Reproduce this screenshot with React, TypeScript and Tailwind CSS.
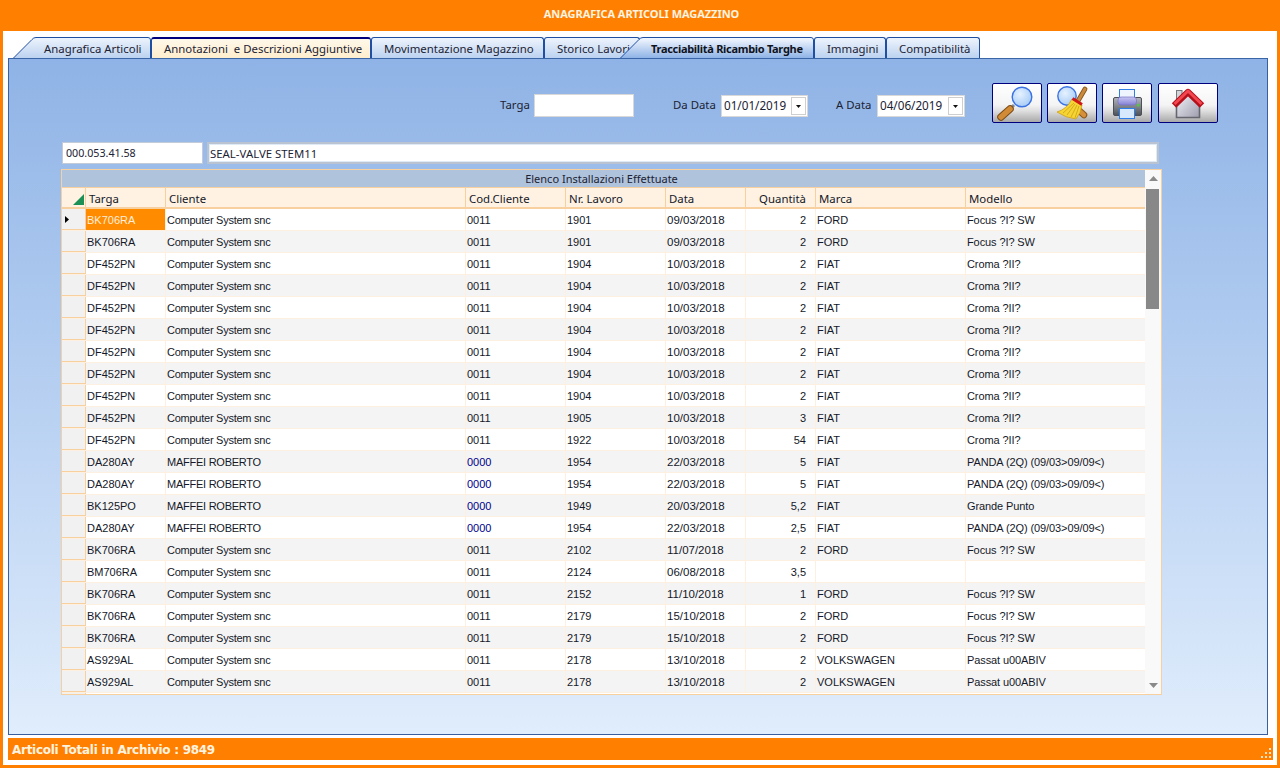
import React from "react";

const COLS = "grid grid-cols-[24px_80px_300px_100px_100px_80px_70px_150px_179px]";

type R = [string, string, string, string, string, string, string, string];
const CS = "Computer System snc";
const MR = "MAFFEI ROBERTO";
const F = "Focus ?I? SW";
const C = "Croma ?II?";
const P = "PANDA (2Q) (09/03>09/09<)";
const S = "Passat u00ABIV";
const rows: R[] = [
  ["BK706RA", CS, "0011", "1901", "09/03/2018", "2", "FORD", F],
  ["BK706RA", CS, "0011", "1901", "09/03/2018", "2", "FORD", F],
  ["DF452PN", CS, "0011", "1904", "10/03/2018", "2", "FIAT", C],
  ["DF452PN", CS, "0011", "1904", "10/03/2018", "2", "FIAT", C],
  ["DF452PN", CS, "0011", "1904", "10/03/2018", "2", "FIAT", C],
  ["DF452PN", CS, "0011", "1904", "10/03/2018", "2", "FIAT", C],
  ["DF452PN", CS, "0011", "1904", "10/03/2018", "2", "FIAT", C],
  ["DF452PN", CS, "0011", "1904", "10/03/2018", "2", "FIAT", C],
  ["DF452PN", CS, "0011", "1904", "10/03/2018", "2", "FIAT", C],
  ["DF452PN", CS, "0011", "1905", "10/03/2018", "3", "FIAT", C],
  ["DF452PN", CS, "0011", "1922", "10/03/2018", "54", "FIAT", C],
  ["DA280AY", MR, "0000", "1954", "22/03/2018", "5", "FIAT", P],
  ["DA280AY", MR, "0000", "1954", "22/03/2018", "5", "FIAT", P],
  ["BK125PO", MR, "0000", "1949", "20/03/2018", "5,2", "FIAT", "Grande Punto"],
  ["DA280AY", MR, "0000", "1954", "22/03/2018", "2,5", "FIAT", P],
  ["BK706RA", CS, "0011", "2102", "11/07/2018", "2", "FORD", F],
  ["BM706RA", CS, "0011", "2124", "06/08/2018", "3,5", "", ""],
  ["BK706RA", CS, "0011", "2152", "11/10/2018", "1", "FORD", F],
  ["BK706RA", CS, "0011", "2179", "15/10/2018", "2", "FORD", F],
  ["BK706RA", CS, "0011", "2179", "15/10/2018", "2", "FORD", F],
  ["AS929AL", CS, "0011", "2178", "13/10/2018", "2", "VOLKSWAGEN", S],
  ["AS929AL", CS, "0011", "2178", "13/10/2018", "2", "VOLKSWAGEN", S],
];

function Tab({
  w,
  pl,
  label,
  variant = "plain",
}: {
  w: number;
  pl: number;
  label: string;
  variant?: "plain" | "cream" | "first" | "active";
}) {
  if (variant === "first" || variant === "active") {
    const active = variant === "active";
    const id = active ? "tabActive" : "tabFirst";
    return (
      <div className="relative z-10 h-[21px] shrink-0" style={{ width: w, marginLeft: active ? -20 : 0 }}>
        <svg className="absolute inset-0" width={w} height={21} viewBox={`0 0 ${w} 21`}>
          <defs>
            <linearGradient id={id} x1="0" y1="0" x2="0" y2="1">
              <stop offset="0" stopColor={active ? "#f6faff" : "#eef4fc"} />
              <stop offset="1" stopColor={active ? "#8fb3e6" : "#bcd2f0"} />
            </linearGradient>
          </defs>
          <path
            d={`M0.5 21 L19 2.5 Q20.5 0.5 23 0.5 L${w - 3} 0.5 Q${w - 0.5} 0.5 ${w - 0.5} 3 L${w - 0.5} 21 Z`}
            fill={`url(#${id})`}
            stroke="none"
          />
          <path
            d={`M0.5 21 L19 2.5 Q20.5 0.5 23 0.5 L${w - 3} 0.5 Q${w - 0.5} 0.5 ${w - 0.5} 3 L${w - 0.5} 21`}
            fill="none"
            stroke="#1f4fa3"
          />
        </svg>
        <span
          className={`absolute left-0 top-[4px] whitespace-nowrap leading-[16px] ${active ? "text-[11px] font-bold tracking-[-0.3px] text-[#10131c]" : "text-[11.4px] text-[#1c2233]"}`}
          style={{ paddingLeft: pl }}
        >
          {label}
        </span>
      </div>
    );
  }
  const cream = variant === "cream";
  return (
    <div
      className={`h-[21px] shrink-0 rounded-t-[3px] border-x border-t border-[#1f4fa3] ${cream ? "border-t-2 border-t-[#00007f] bg-gradient-to-b from-[#fff8ea] to-[#ffeecd] pt-[2px]" : "bg-gradient-to-b from-[#eef4fc] to-[#bcd2f0] pt-[3px]"} whitespace-pre text-[11.4px] leading-[16px] text-[#1c2233]`}
      style={{ width: w, paddingLeft: pl }}
    >
      {label}
    </div>
  );
}

function Btn({ w, children }: { w: number; children: React.ReactNode }) {
  return (
    <button
      className="block h-[40px] shrink-0 rounded-[2px] border border-[#00007f] bg-[linear-gradient(180deg,#ffffff_0%,#f4f4f4_55%,#e0e0e0_70%,#a9a9a9_100%)]"
      style={{ width: w }}
    >
      {children}
    </button>
  );
}

function Lens({ cx, cy, r, id }: { cx: number; cy: number; r: number; id: string }) {
  return (
    <>
      <defs>
        <radialGradient id={id} cx="0.4" cy="0.35" r="0.8">
          <stop offset="0" stopColor="#e6f2ff" />
          <stop offset="1" stopColor="#9cc4f4" />
        </radialGradient>
      </defs>
      <circle cx={cx} cy={cy} r={r} fill={`url(#${id})`} stroke="#3a72e4" strokeWidth="1.4" />
    </>
  );
}

const SearchIcon = () => (
  <svg width="48" height="38" viewBox="0 0 48 38" className="block">
    <path d="M21 21 L17 25" stroke="#7e8792" strokeWidth="3" />
    <path d="M17 25 L8 33" stroke="#7a4a14" strokeWidth="7.5" strokeLinecap="round" />
    <path d="M17 25 L8 33" stroke="#d18a35" strokeWidth="5.5" strokeLinecap="round" />
    <Lens cx={29} cy={13} r={9.8} id="l1" />
  </svg>
);

const BroomIcon = () => (
  <svg width="48" height="38" viewBox="0 0 48 38" className="block">
    <path d="M24 20 L36 31" stroke="#8a5518" strokeWidth="6.5" strokeLinecap="round" />
    <path d="M24 20 L36 31" stroke="#d68f3a" strokeWidth="4.5" strokeLinecap="round" />
    <Lens cx={19} cy={12} r={9.2} id="l2" />
    <path d="M37 5 L30 17" stroke="#8a5518" strokeWidth="4.8" strokeLinecap="round" />
    <path d="M37 5 L30 17" stroke="#c98a3e" strokeWidth="3" strokeLinecap="round" />
    <path d="M24 15 L34 21 Q33 29 28 35 Q18 34 9 28 Q19 25 24 15 Z" fill="#f6d433" stroke="#c79a16" strokeWidth="0.7" />
    <path d="M26 19 L15 29 M27 20 L19 31 M29 21 L23 33 M31 22 L27 34" stroke="#c79a16" strokeWidth="0.7" />
    <path d="M24.5 14.5 L34 20.5" stroke="#d01818" strokeWidth="3" />
  </svg>
);

const PrinterIcon = () => (
  <svg width="48" height="38" viewBox="0 0 48 38" className="block">
    <defs>
      <linearGradient id="pb" x1="0" y1="0" x2="0" y2="1">
        <stop offset="0" stopColor="#b4b7bd" />
        <stop offset="1" stopColor="#4c5058" />
      </linearGradient>
      <linearGradient id="pp" x1="0" y1="0" x2="0" y2="1">
        <stop offset="0" stopColor="#c9c7f4" />
        <stop offset="1" stopColor="#8480d4" />
      </linearGradient>
    </defs>
    <rect x="16.5" y="5.5" width="15" height="9" fill="#eef5ff" stroke="#2f7fe8" />
    <rect x="10.5" y="13.5" width="28" height="18" rx="1.5" fill="url(#pb)" stroke="#4c4f56" />
    <rect x="15" y="13" width="18.5" height="8" rx="3" fill="url(#pp)" stroke="#7773c4" strokeWidth="0.7" />
    <rect x="16.5" y="24.5" width="15" height="10" fill="#d6e9fd" stroke="#2f7fe8" />
    <rect x="34" y="20" width="2.4" height="2.4" fill="#4ecb3b" />
  </svg>
);

const HomeIcon = () => (
  <svg width="58" height="38" viewBox="0 0 58 38" className="block">
    <defs>
      <linearGradient id="hb" x1="0" y1="0" x2="1" y2="1">
        <stop offset="0" stopColor="#f6f6fb" />
        <stop offset="1" stopColor="#9c9cae" />
      </linearGradient>
    </defs>
    <rect x="17.5" y="6.5" width="5.5" height="10" fill="#d4d4d8" stroke="#77777f" />
    <path d="M17.5 20 L29 9 L40.5 20 V33.5 H17.5 Z" fill="url(#hb)" stroke="#66666f" strokeWidth="1.6" />
    <path d="M15 21.5 L29 8 L43 21.5" fill="none" stroke="#b50f1a" strokeWidth="6.4" strokeLinejoin="round" />
    <path d="M15.5 20 L29 7 L42.5 20" fill="none" stroke="#f24750" strokeWidth="3" strokeLinejoin="round" />
  </svg>
);

function DateBox({ w, value }: { w: number; value: string }) {
  return (
    <div
      className="flex h-[22px] shrink-0 items-center justify-between border border-[#d8d8d8] bg-white pl-[2px] pr-[1px] text-[11.7px] text-[#1c2233]"
      style={{ width: w }}
    >
      <span>{value}</span>
      <span className="flex h-[18px] w-[15px] items-center justify-center border border-[#cfcfcf] bg-white">
        <svg width="5" height="3" viewBox="0 0 5 3">
          <path d="M0 0 H5 L2.5 3 Z" fill="#111" />
        </svg>
      </span>
    </div>
  );
}

export default function App() {
  return (
    <div className="flex h-[768px] w-[1280px] flex-col overflow-hidden bg-[#ff8000] font-['Noto_Sans',sans-serif]">
      <div className="flex h-[31px] shrink-0 items-center justify-center pb-[2px] pl-[3px] text-[11px] font-bold tracking-[-0.05px] text-[#fff4e0]">
        ANAGRAFICA ARTICOLI MAGAZZINO
      </div>
      <div className="mb-[3px] ml-[3px] mr-[3px] flex flex-1 flex-col bg-white pl-[5px]">
        {/* tabs */}
        <div className="flex h-[27px] shrink-0 items-end pl-[5px]">
          <Tab w={138} pl={31} label="Anagrafica Articoli" variant="first" />
          <Tab w={220} pl={12} label="Annotazioni  e Descrizioni Aggiuntive" variant="cream" />
          <Tab w={173} pl={12} label="Movimentazione Magazzino" />
          <Tab w={96} pl={12} label="Storico Lavori" />
          <Tab w={194} pl={31} label="Tracciabilità Ricambio Targhe" variant="active" />
          <Tab w={72} pl={12} label="Immagini" />
          <Tab w={94} pl={12} label="Compatibilità" />
        </div>
        {/* panel */}
        <div className="mr-[9px] h-[677px] shrink-0 border border-[#3a5f9f] border-t-[#3a66a8] bg-gradient-to-b from-[#8fb3e6] to-[#e0edfc] pt-[24px]">
          <div className="flex h-[40px] items-start pl-[491px] text-[11.4px] text-[#1c2233]">
            <span className="mt-[14px] w-[29px] shrink-0 leading-[16px]">Targa</span>
            <div className="ml-[5px] mt-[11px] h-[23px] w-[100px] shrink-0 border border-[#d8d8d8] bg-white" />
            <span className="ml-[39px] mt-[14px] w-[39px] shrink-0 whitespace-nowrap leading-[16px]">Da Data</span>
            <div className="ml-[9px] mt-[12px]">
              <DateBox w={87} value="01/01/2019" />
            </div>
            <span className="ml-[28px] mt-[14px] w-[35px] shrink-0 whitespace-nowrap leading-[16px]">A Data</span>
            <div className="ml-[6px] mt-[12px]">
              <DateBox w={88} value="04/06/2019" />
            </div>
            <div className="ml-[27px] flex shrink-0 gap-[5px]">
              <Btn w={50}><SearchIcon /></Btn>
              <Btn w={50}><BroomIcon /></Btn>
              <Btn w={50}><PrinterIcon /></Btn>
              <div className="ml-[1px]">
                <Btn w={60}><HomeIcon /></Btn>
              </div>
            </div>
          </div>
          {/* code row */}
          <div className="mt-[19px] flex h-[22px] gap-[4px] pl-[53px] text-[#1c2233]">
            <div className="flex w-[141px] items-center border border-[#c3cbd8] bg-white pl-[3px] pt-[1px] text-[10.7px]">000.053.41.58</div>
            <div className="flex w-[952px] items-center border-2 border-[#b9c3d1] bg-white pl-[1px] pt-[1px] text-[11.4px] shadow-[inset_0_0_0_1px_#dfeaf7]">
              SEAL-VALVE STEM11
            </div>
          </div>
          {/* table */}
          <div className="ml-[52px] mt-[5px] flex h-[526px] w-[1101px] border border-[#f8cf9f] bg-white font-['Liberation_Sans',sans-serif] text-[11px] text-[#141828]">
            <div className="flex w-[1083px] shrink-0 flex-col overflow-hidden">
              <div className="flex h-[18px] shrink-0 items-center justify-center border-b border-[#f8cf9f] bg-[#afc3dc] pr-[4px] pt-[2px] font-['Noto_Sans',sans-serif] text-[11px] text-[#1c2233]">
                Elenco Installazioni Effettuate
              </div>
              <div className={`${COLS} h-[21px] shrink-0 grid-rows-[19px] border-b-2 border-[#f8cf9f] bg-[#fff2e3] font-['Noto_Sans',sans-serif] text-[11.4px] leading-[19px] [&>div]:pt-[1px]`}>
                <div className="relative border-r border-[#f8cf9f]">
                  <svg className="absolute left-[11px] top-[6px]" width="11" height="11" viewBox="0 0 11 11">
                    <path d="M0 11 L11 0 V11 Z" fill="#1c9157" />
                  </svg>
                </div>
                <div className="border-r border-[#f8cf9f] pl-[3px]">Targa</div>
                <div className="border-r border-[#f8cf9f] pl-[3px]">Cliente</div>
                <div className="border-r border-[#f8cf9f] pl-[3px]">Cod.Cliente</div>
                <div className="border-r border-[#f8cf9f] pl-[3px]">Nr. Lavoro</div>
                <div className="border-r border-[#f8cf9f] pl-[3px]">Data</div>
                <div className="border-r border-[#f8cf9f] pr-[9px] text-right">Quantità</div>
                <div className="border-r border-[#f8cf9f] pl-[3px]">Marca</div>
                <div className="pl-[3px]">Modello</div>
              </div>
              {rows.map((r, i) => (
                <div
                  key={i}
                  className={`${COLS} h-[22px] shrink-0 grid-rows-[21px] border-b border-[#fdf0e1] leading-[19px] [&>div]:pt-[2px] ${i % 2 ? "bg-[#f4f4f4]" : "bg-white"}`}
                >
                  <div className="relative border-b border-r border-[#f8cf9f] bg-[#f1f1f1]">
                    {i === 0 && (
                      <svg className="absolute left-[3px] top-[7px]" width="4" height="7" viewBox="0 0 4 7">
                        <path d="M0 0 L4 3.5 L0 7 Z" fill="#000" />
                      </svg>
                    )}
                  </div>
                  <div className={`border-r border-[#fdf0e1] pl-[1px] ${i === 0 ? "bg-[#ff8c00] text-[#ffeedd]" : ""}`}>
                    {r[0]}
                  </div>
                  <div className="border-r border-[#fdf0e1] pl-[1px] tracking-[-0.25px]">{r[1]}</div>
                  <div className={`border-r border-[#fdf0e1] pl-[1px] ${r[2] === "0000" ? "text-[#00008b]" : ""}`}>{r[2]}</div>
                  <div className="border-r border-[#fdf0e1] pl-[1px]">{r[3]}</div>
                  <div className="border-r border-[#fdf0e1] pl-[1px] text-[11.5px]">{r[4]}</div>
                  <div className="border-r border-[#fdf0e1] pr-[9px] text-right">{r[5]}</div>
                  <div className="border-r border-[#fdf0e1] pl-[1px]">{r[6]}</div>
                  <div className="whitespace-nowrap pl-[1px] tracking-[-0.1px]">{r[7]}</div>
                </div>
              ))}
              <div className="h-[1px] w-[24px] border-r border-[#f8cf9f] bg-[#f1f1f1]" />
            </div>
            <div className="flex w-[16px] shrink-0 flex-col items-center bg-[#f9f9f9]">
              <svg className="mt-[6px] h-[5px] w-[9px]" viewBox="0 0 9 5">
                <path d="M0 5 L4.5 0 L9 5 Z" fill="#8a8a8a" />
              </svg>
              <div className="ml-[-1px] mt-[8px] h-[120px] w-[13px] bg-[#888888]" />
              <svg className="mt-[374px] h-[5px] w-[9px]" viewBox="0 0 9 5">
                <path d="M0 0 L9 0 L4.5 5 Z" fill="#8a8a8a" />
              </svg>
            </div>
          </div>
        </div>
        {/* status */}
        <div className="mr-[4px] mt-[3px] flex h-[22px] shrink-0 items-center justify-between bg-[#ff8000] pl-[4px] pr-[1px]">
          <span className="pt-[2px] font-['DejaVu_Sans',sans-serif] text-[12px] font-bold tracking-[-0.28px] text-[#fff4e0]">
            Articoli Totali in Archivio : 9849
          </span>
          <svg className="mt-[8px]" width="12" height="12" viewBox="0 0 12 12">
            <g fill="#fde3c4">
              <rect x="9" y="1" width="2" height="2" />
              <rect x="5" y="5" width="2" height="2" />
              <rect x="9" y="5" width="2" height="2" />
              <rect x="1" y="9" width="2" height="2" />
              <rect x="5" y="9" width="2" height="2" />
              <rect x="9" y="9" width="2" height="2" />
            </g>
          </svg>
        </div>
      </div>
    </div>
  );
}
